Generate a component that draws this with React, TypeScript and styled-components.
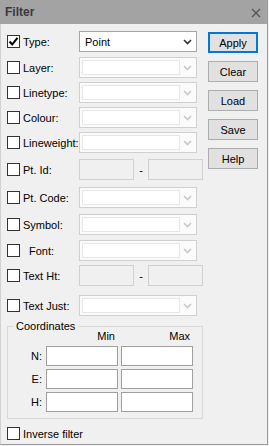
import React from 'react';
import styled, { createGlobalStyle } from 'styled-components';

const GlobalStyle = createGlobalStyle`
  html, body {
    margin: 0;
    padding: 0;
    background: #f0f0f0;
  }

  * {
    box-sizing: border-box;
  }
`;

interface FieldRow {
  label: string;
  kind: 'combo' | 'range';
  gap: number;
  indent?: boolean;
}

const rows: FieldRow[] = [
  { label: 'Layer:', kind: 'combo', gap: 5 },
  { label: 'Linetype:', kind: 'combo', gap: 4 },
  { label: 'Colour:', kind: 'combo', gap: 4 },
  { label: 'Lineweight:', kind: 'combo', gap: 4 },
  { label: 'Pt. Id:', kind: 'range', gap: 6 },
  { label: 'Pt. Code:', kind: 'combo', gap: 7 },
  { label: 'Symbol:', kind: 'combo', gap: 6 },
  { label: 'Font:', kind: 'combo', gap: 5, indent: true },
  { label: 'Text Ht:', kind: 'range', gap: 4 },
  { label: 'Text Just:', kind: 'combo', gap: 9 },
];

const buttons = ['Apply', 'Clear', 'Load', 'Save', 'Help'];

function Chevron({ disabled }: { disabled?: boolean }) {
  return (
    <ChevronIcon width='9' height='6' viewBox='0 0 9 6'>
      <path
        d='M1 1 L4.5 4.5 L8 1'
        fill='none'
        stroke={disabled ? '#c8c8c8' : '#333'}
        strokeWidth='1.6'
      />
    </ChevronIcon>
  );
}

function CheckMark() {
  return (
    <svg width='11' height='11' viewBox='0 0 11 11'>
      <path d='M1.5 5.5 L4.2 8.4 L9.5 1.8' fill='none' stroke='#000' strokeWidth='2' />
    </svg>
  );
}

export default function App() {
  return (
    <>
      <GlobalStyle />
      <Window>
        <TitleBar>
          <Title>Filter</Title>
          <CloseIcon width='10' height='10' viewBox='0 0 10 10'>
            <path d='M1 1 L9 9 M9 1 L1 9' stroke='#555' strokeWidth='1.3' />
          </CloseIcon>
        </TitleBar>
        <Content>
          <FormColumn>
            <Row gap={7}>
              <CheckLabel>
                <Box>
                  <CheckMark />
                </Box>
                <LabelText>Type:</LabelText>
              </CheckLabel>
              <Combo>
                <ComboText>Point</ComboText>
                <Chevron />
              </Combo>
            </Row>
            {rows.map((row) => (
              <Row key={row.label} gap={row.gap}>
                <CheckLabel>
                  <Box />
                  <LabelText indent={row.indent}>{row.label}</LabelText>
                </CheckLabel>
                {row.kind === 'combo' ? (
                  <Combo disabled>
                    <ComboField />
                    <Chevron disabled />
                  </Combo>
                ) : (
                  <Range>
                    <DisabledInput />
                    <Dash>-</Dash>
                    <DisabledInput />
                  </Range>
                )}
              </Row>
            ))}
            <Group>
              <Legend>Coordinates</Legend>
              <CoordGrid>
                <span />
                <ColHead>Min</ColHead>
                <ColHead>Max</ColHead>
                {['N:', 'E:', 'H:'].map((axis) => (
                  <React.Fragment key={axis}>
                    <AxisLabel>{axis}</AxisLabel>
                    <CoordInput />
                    <CoordInput />
                  </React.Fragment>
                ))}
              </CoordGrid>
            </Group>
            <InverseRow>
              <Box />
              <LabelText>Inverse filter</LabelText>
            </InverseRow>
          </FormColumn>
          <ButtonColumn>
            {buttons.map((b) => (
              <Button key={b} focused={b === 'Apply'}>
                {b}
              </Button>
            ))}
          </ButtonColumn>
        </Content>
      </Window>
    </>
  );
}

const Window = styled.div`
  width: 268px;
  height: 445px;

  display: flex;
  flex-direction: column;

  background: #f0f0f0;
  border-left: 1px solid #d0d0d0;
  border-right: 1px solid #9a9a9a;
  border-bottom: 1px solid #9a9a9a;

  font-family: 'Liberation Sans', Arial, sans-serif;
  font-size: 11px;
  color: #000;
`;

const TitleBar = styled.div`
  height: 24px;
  margin-left: -1px;

  display: flex;
  align-items: center;
  justify-content: space-between;

  padding: 0 6px 0 5px;

  background: #a3a3a3;
`;

const Title = styled.span`
  font-size: 12px;
  font-weight: bold;
  color: #3a3a3a;
`;

const CloseIcon = styled.svg`
  display: block;
  margin-top: 2px;
`;

const Content = styled.div`
  display: flex;
  gap: 5px;

  padding-left: 6px;
`;

const FormColumn = styled.div`
  width: 196px;

  display: flex;
  flex-direction: column;
`;

const Row = styled.div<{ gap: number }>`
  height: 21px;
  margin-top: ${({ gap }) => gap}px;

  display: flex;
  align-items: center;
`;

const CheckLabel = styled.label`
  width: 72px;
  flex-shrink: 0;

  display: flex;
  align-items: center;
`;

const Box = styled.span`
  width: 13px;
  height: 13px;

  display: flex;
  align-items: center;
  justify-content: center;

  flex-shrink: 0;

  background: #fff;
  border: 1px solid #333;
`;

const LabelText = styled.span<{ indent?: boolean }>`
  margin-left: ${({ indent }) => (indent ? 9 : 3)}px;
  white-space: nowrap;
`;

const Combo = styled.div<{ disabled?: boolean }>`
  width: 118px;
  height: 21px;
  flex-shrink: 0;

  display: flex;
  align-items: center;

  padding: 2px;

  background: ${({ disabled }) => (disabled ? '#fbfbfb' : '#fff')};
  border: 1px solid ${({ disabled }) => (disabled ? '#d0d0d0' : '#a6a6a6')};
`;

const ComboText = styled.span`
  flex: 1;
  padding-left: 3px;
`;

const ComboField = styled.span`
  width: 98px;
  height: 15px;

  background: #fff;
  border: 1px solid #e6e6e6;
`;

const ChevronIcon = styled.svg`
  display: block;
  margin-left: auto;
  margin-right: 2px;
`;

const Range = styled.div`
  display: flex;
  align-items: center;
`;

const DisabledInput = styled.span`
  width: 55px;
  height: 21px;

  background: #f0f0f0;
  border: 1px solid #d0d0d0;
`;

const Dash = styled.span`
  width: 14px;
  text-align: center;
`;

const Group = styled.fieldset`
  width: 196px;
  height: 99px;

  margin: 4px 0 0 0;
  padding: 0;

  border: 1px solid #d8d8d8;
`;

const Legend = styled.legend`
  margin-left: 5px;
  padding: 0 3px;
`;

const CoordGrid = styled.div`
  display: grid;
  grid-template-columns: 35px 72px 72px;
  grid-template-rows: 14px 20px 20px 20px;
  column-gap: 3px;
  row-gap: 3px;

  margin-top: -3px;
`;

const ColHead = styled.span`
  display: flex;
  align-items: center;
  justify-content: flex-end;
  padding-right: 3px;
`;

const AxisLabel = styled.span`
  display: flex;
  align-items: center;
  justify-content: flex-end;
  padding-right: 1px;
`;

const CoordInput = styled.span`
  background: #fff;
  border: 1px solid #a0a0a0;
`;

const InverseRow = styled.label`
  margin-top: 8px;

  display: flex;
  align-items: center;
`;

const ButtonColumn = styled.div`
  width: 50px;

  display: flex;
  flex-direction: column;
  gap: 8px;

  padding-top: 8px;
`;

const Button = styled.div<{ focused?: boolean }>`
  height: 21px;

  display: flex;
  align-items: center;
  justify-content: center;

  background: #e1e1e1;
  border: 1px solid ${({ focused }) => (focused ? '#0078d7' : '#adadad')};
  box-shadow: ${({ focused }) => (focused ? 'inset 0 0 0 1px #0078d7' : 'none')};
`;
